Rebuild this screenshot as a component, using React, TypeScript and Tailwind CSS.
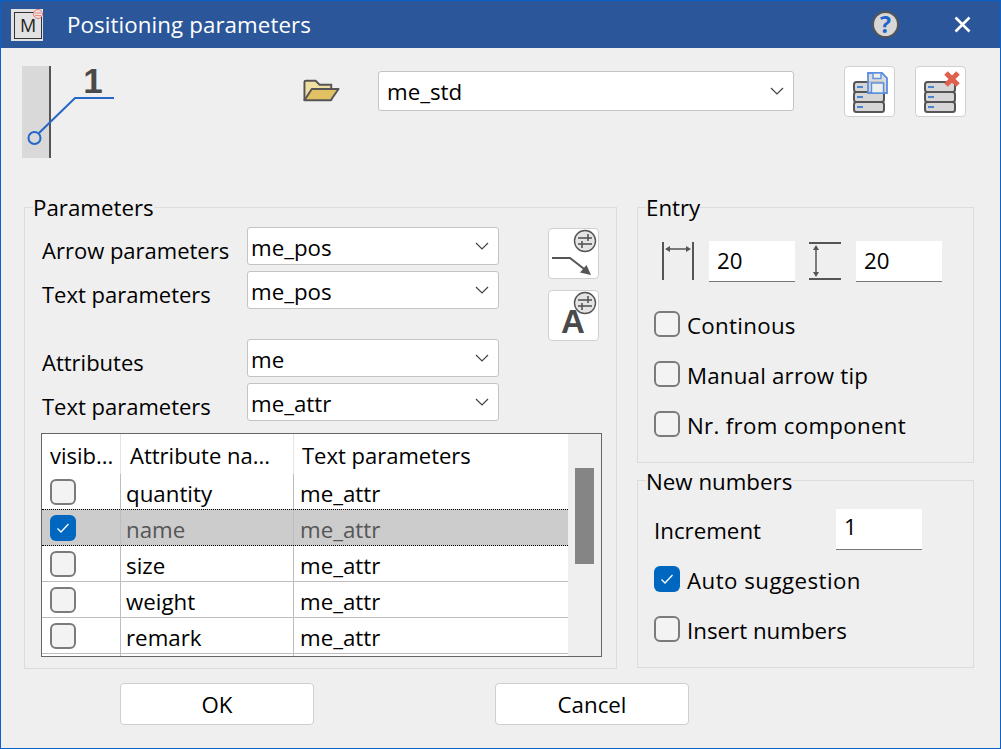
import React from 'react'

const Chevron = () => (
  <svg width="14" height="8" viewBox="0 0 14 8" className="shrink-0">
    <polyline points="1,1 7,7 13,1" fill="none" stroke="#444" strokeWidth="1.2" />
  </svg>
)

const Select = ({ value, className, textClass = 'pt-[3px]' }: any) => (
  <div className={`flex items-center justify-between rounded-[3px] border border-[#c4c4c4] bg-white pr-[9px] ${className}`}>
    <span className={textClass}>{value}</span>
    <Chevron />
  </div>
)

const Check = ({ on }: any) =>
  on ? (
    <div className="flex h-[26px] w-[26px] shrink-0 items-center justify-center rounded-[6px] bg-[#0067c0]">
      <svg width="14" height="12" viewBox="0 0 14 12">
        <polyline points="1.5,6.5 5,10 12.5,2" fill="none" stroke="#fff" strokeWidth="1.3" />
      </svg>
    </div>
  ) : (
    <div className="h-[26px] w-[26px] shrink-0 rounded-[6px] border-2 border-[#7b7b7b] bg-[#f3f3f3]" />
  )

const CheckRow = ({ on, label, className, track = 'tracking-[0.3px]' }: any) => (
  <div className={`flex h-[26px] items-center gap-[7px] ${className}`}>
    <Check on={on} />
    <span className={`pt-[3px] ${track}`}>{label}</span>
  </div>
)

const IconButton = ({ children, className }: any) => (
  <div className={`flex h-[51px] w-[51px] items-center justify-center rounded-[4px] border border-[#d0d0d0] bg-white ${className}`}>
    {children}
  </div>
)

const Stack = () => (
  <g>
    {[15, 25, 35].map((y) => (
      <g key={y}>
        <rect x="9" y={y} width="30" height="10" rx="2.5" fill="#d6d6d6" stroke="#555" strokeWidth="2" />
        <line x1="12" x2="18" y1={y + 5} y2={y + 5} stroke="#2a6fd0" strokeWidth="1.6" />
      </g>
    ))}
  </g>
)

const Sliders = ({ cx, cy }: { cx: number; cy: number }) => (
  <g>
    <circle cx={cx} cy={cy} r="10.5" fill="#e4e4e4" stroke="#555" strokeWidth="1.4" />
    <line x1={cx - 7} x2={cx + 7} y1={cy - 3} y2={cy - 3} stroke="#555" strokeWidth="1.6" />
    <line x1={cx - 7} x2={cx + 7} y1={cy + 3} y2={cy + 3} stroke="#555" strokeWidth="1.6" />
    <line x1={cx + 3} x2={cx + 3} y1={cy - 7} y2={cy} stroke="#555" strokeWidth="1.6" />
    <line x1={cx - 3} x2={cx - 3} y1={cy} y2={cy + 7} stroke="#555" strokeWidth="1.6" />
  </g>
)

const Group = ({ title, className, legend = 'pt-[2px] leading-[28px]', children }: any) => (
  <fieldset className={`border border-[#dcdcdc] ${className}`}>
    <legend className={`ml-[8px] ${legend}`}>{title}</legend>
    {children}
  </fieldset>
)

const FormRow = ({ label, value, className }: any) => (
  <div className={`flex h-[38px] items-center ${className}`}>
    <span className="w-[205px] pt-[8px] text-[22px]">{label}</span>
    <Select value={value} className="h-[38px] flex-1 pl-[3px]" />
  </div>
)

const rows = [
  { name: 'quantity' },
  { name: 'name', on: true },
  { name: 'size' },
  { name: 'weight' },
  { name: 'remark' },
]

const App = () => {
  return (
    <div className="flex h-[749px] w-[1001px] flex-col overflow-hidden border border-[#0a62c9] bg-[#efefef] font-['Open_Sans','Noto_Sans',sans-serif] text-[22.3px] leading-[30px] text-black">
      {/* title bar */}
      <div className="flex h-[47px] shrink-0 items-center bg-[#2b579a] text-white">
        <div className="ml-[10px] flex h-[32px] w-[32px] items-end justify-end bg-[#e2e2e2] pb-[2px] pr-[1px]">
          <div className="relative flex h-[27px] w-[28px] items-center justify-center border border-[#333] text-[18px] leading-none text-[#222]">
            M
            <svg width="12" height="12" viewBox="0 0 12 12" className="absolute -right-[3px] -top-[5px]">
              <circle cx="6" cy="6" r="4.5" fill="#f4dcdc" stroke="#e07a70" strokeWidth="1" />
              <line x1="3" x2="9" y1="5" y2="5" stroke="#e07a70" strokeWidth="0.8" />
              <line x1="3" x2="9" y1="7.5" y2="7.5" stroke="#e07a70" strokeWidth="0.8" />
            </svg>
          </div>
        </div>
        <span className="ml-[24px] tracking-[0.1px]">Positioning parameters</span>
        <div className="ml-auto mr-[29px] flex items-center gap-[55px]">
          <div className="flex h-[27px] w-[27px] items-center justify-center rounded-full border-2 border-[#555] bg-[#d8d8d8] text-[23px] font-bold leading-none text-[#1f62c8]">
            ?
          </div>
          <svg width="17" height="17" viewBox="0 0 17 17">
            <path d="M1.5 1.5 L15.5 15.5 M15.5 1.5 L1.5 15.5" stroke="#fff" strokeWidth="2.6" />
          </svg>
        </div>
      </div>

      <div className="flex flex-1 flex-col px-[23px]">
        {/* top row */}
        <div className="mt-[18px] flex h-[94px] shrink-0 items-start">
          <svg width="100" height="94" viewBox="0 0 100 94" className="-ml-[2px] shrink-0 overflow-visible">
            <rect x="0" y="0" width="27" height="92" fill="#d9d9d9" />
            <line x1="28" x2="28" y1="0" y2="92" stroke="#555" strokeWidth="2" />
            <circle cx="12.5" cy="72" r="6" fill="none" stroke="#2566c8" strokeWidth="2" />
            <polyline points="17,67 53,32 92,32" fill="none" stroke="#2566c8" strokeWidth="2" />
            <text x="71" y="27" textAnchor="middle" fontSize="35" fontWeight="700" fill="#4a4a4a" fontFamily="Liberation Sans">1</text>
          </svg>
          <svg width="37" height="23" viewBox="0 0 38 23" className="ml-[181px] mt-[13px] shrink-0">
            <path d="M1.5 21 V3 Q1.5 1.5 3 1.5 H13 L17 5.5 H29 V21 Z" fill="#f0dfa2" stroke="#555" strokeWidth="2" />
            <path d="M1.5 21.5 L9 10 H36.5 L28.5 21.5 Z" fill="#e2c064" stroke="#555" strokeWidth="2" strokeLinejoin="round" />
          </svg>
          <Select value="me_std" textClass="pt-[1px]" className="ml-[38px] mt-[5px] h-[40px] w-[416px] pl-[8px]" />
          <IconButton className="ml-[50px]">
            <svg width="49" height="49" viewBox="0 0 49 49">
              <Stack />
              <path d="M23 6 H37 L42 11 V26 H23 Z" fill="#d6d6d6" fillOpacity="0.85" stroke="#5b90e0" strokeWidth="1.8" />
              <rect x="28" y="6" width="8" height="5.5" fill="#eee" stroke="#5b90e0" strokeWidth="1.4" />
              <rect x="26.5" y="16" width="12" height="10" fill="#eee" stroke="#5b90e0" strokeWidth="1.4" />
            </svg>
          </IconButton>
          <IconButton className="ml-[20px]">
            <svg width="49" height="49" viewBox="0 0 49 49">
              <Stack />
              <path d="M30 6 L42 18 M42 6 L30 18" stroke="#e0604e" strokeWidth="5" />
            </svg>
          </IconButton>
        </div>

        {/* groups */}
        <div className="mt-[32px] flex gap-[20px]">
          <Group title="Parameters" className="h-[477px] w-[593px] shrink-0">
            <div className="flex pl-[17px] pt-[5px]">
              <div className="w-[457px]">
                <FormRow label="Arrow parameters" value="me_pos" />
                <FormRow label="Text parameters" value="me_pos" className="mt-[6px]" />
                <FormRow label="Attributes" value="me" className="mt-[30px]" />
                <FormRow label="Text parameters" value="me_attr" className="mt-[6px]" />
              </div>
              <div className="ml-[49px] mt-[1px] flex flex-col gap-[11px]">
                <IconButton>
                  <svg width="49" height="49" viewBox="0 0 49 49">
                    <Sliders cx={36} cy={12} />
                    <polyline points="3,29 21,29 39,43" fill="none" stroke="#555" strokeWidth="2" />
                    <path d="M42 46 L31 43.5 L37.5 36 Z" fill="#555" />
                  </svg>
                </IconButton>
                <IconButton>
                  <svg width="49" height="49" viewBox="0 0 49 49">
                    <text x="24" y="42" textAnchor="middle" fontSize="33" fontWeight="700" fill="#4a4a4a" fontFamily="Liberation Sans">A</text>
                    <Sliders cx={36} cy={12} />
                  </svg>
                </IconButton>
              </div>
            </div>

            {/* attribute table */}
            <div className="ml-[16px] mt-[12px] flex h-[224px] w-[561px] overflow-hidden border border-[#666] bg-white">
              <div className="w-[526px] shrink-0">
                <div className="flex h-[40px] text-[22px]">
                  <div className="w-[79px] border-r border-[#e4e4e4] pl-[8px] pt-[6px]">visib...</div>
                  <div className="w-[173px] border-r border-[#e4e4e4] pl-[9px] pt-[6px]">Attribute na...</div>
                  <div className="pl-[8px] pt-[6px]">Text parameters</div>
                </div>
                {rows.map((r) => (
                  <div
                    key={r.name}
                    className={`flex h-[36px] border-b ${r.on ? 'relative -mt-[1px] h-[37px] border-t border-dotted border-black bg-[#cccccc] text-[#555]' : 'border-[#bdbdbd]'}`}
                  >
                    <div className="flex w-[79px] items-center border-r border-[#bdbdbd] pl-[8px]">
                      <Check on={r.on} />
                    </div>
                    <div className="flex w-[173px] items-center border-r border-[#bdbdbd] pl-[5px] pt-[4px]">{r.name}</div>
                    <div className="flex items-center pl-[6px] pt-[4px]">me_attr</div>
                  </div>
                ))}
                <div className="flex h-[3px]">
                  <div className="w-[79px] border-r border-[#bdbdbd]" />
                  <div className="w-[173px] border-r border-[#bdbdbd]" />
                </div>
              </div>
              <div className="flex-1 bg-[#efefef] pl-[7px] pt-[34px]">
                <div className="h-[96px] w-[19px] bg-[#858585]" />
              </div>
            </div>
          </Group>

          <div className="flex w-[337px] shrink-0 flex-col gap-[2px]">
            <Group title="Entry" className="h-[271px]">
              <div className="pl-[16px]">
                <div className="flex items-center pl-[8px] pt-[19px]">
                  <svg width="32" height="39" viewBox="0 0 32 39" className="shrink-0">
                    <line x1="1" x2="1" y1="0" y2="38" stroke="#555" strokeWidth="2" />
                    <line x1="31" x2="31" y1="0" y2="38" stroke="#555" strokeWidth="2" />
                    <line x1="5" x2="27" y1="7" y2="7" stroke="#555" strokeWidth="1.5" />
                    <path d="M3 7 L8 4 V10 Z M29 7 L24 4 V10 Z" fill="#555" />
                  </svg>
                  <div className="ml-[15px] flex h-[41px] w-[86px] items-center border-b border-[#777] bg-white pl-[8px]">20</div>
                  <svg width="33" height="39" viewBox="0 0 33 39" className="ml-[14px] shrink-0">
                    <line x1="0" x2="32" y1="1" y2="1" stroke="#555" strokeWidth="2" />
                    <line x1="0" x2="32" y1="37" y2="37" stroke="#555" strokeWidth="2" />
                    <line x1="7" x2="7" y1="5" y2="33" stroke="#555" strokeWidth="1.5" />
                    <path d="M7 3 L4 8 H10 Z M7 35 L4 30 H10 Z" fill="#555" />
                  </svg>
                  <div className="ml-[14px] flex h-[41px] w-[86px] items-center border-b border-[#777] bg-white pl-[8px]">20</div>
                </div>
                <CheckRow label="Continous" className="mt-[29px]" />
                <CheckRow label="Manual arrow tip" track="tracking-[0.2px]" className="mt-[24px]" />
                <CheckRow label="Nr. from component" className="mt-[24px]" />
              </div>
            </Group>
            <Group title="New numbers" legend="pt-[4px] leading-[26px]" className="h-[203px]">
              <div className="pl-[16px]">
                <div className="flex items-center pt-[14px]">
                  <span className="w-[182px] pt-[2px]">Increment</span>
                  <div className="flex h-[41px] w-[86px] items-start border-b border-[#777] bg-white pl-[8px] pt-[3px]">1</div>
                </div>
                <CheckRow on label="Auto suggestion" track="tracking-[0.45px]" className="mt-[16px]" />
                <CheckRow label="Insert numbers" track="tracking-normal" className="mt-[24px]" />
              </div>
            </Group>
          </div>
        </div>

        {/* footer */}
        <div className="mt-[14px] flex gap-[181px] pl-[96px]">
          <div className="flex h-[42px] w-[194px] items-center justify-center rounded-[4px] border border-[#cfcfcf] bg-white pt-[2px]">OK</div>
          <div className="flex h-[42px] w-[194px] items-center justify-center rounded-[4px] border border-[#cfcfcf] bg-white pt-[2px]">Cancel</div>
        </div>
      </div>
    </div>
  )
}

export default App
